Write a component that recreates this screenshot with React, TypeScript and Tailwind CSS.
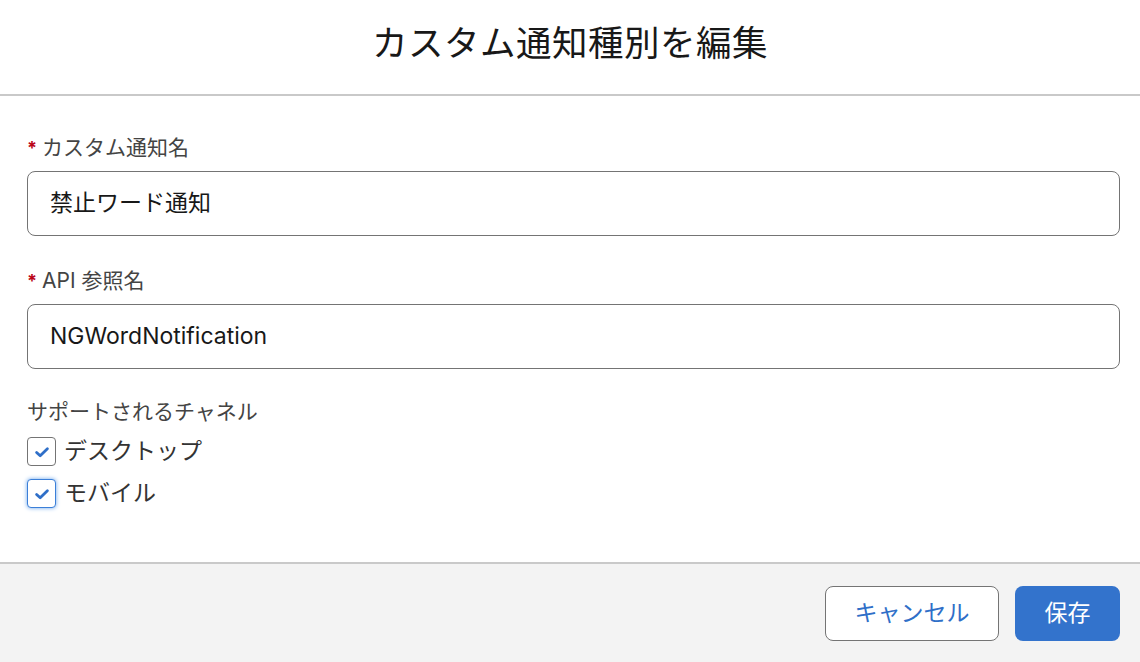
const Check = () => (
  <svg viewBox="0 0 16 16" className="w-[16px] h-[16px] mt-[2px]" fill="none">
    <path d="M2.6 8.4l3.6 3.4L13.4 4.8" stroke="#2f6fc8" strokeWidth="2.8" strokeLinecap="round" strokeLinejoin="round" />
  </svg>
);

const Field = ({ label, value }: { label: string; value: string }) => (
  <div>
    <div className="flex items-center h-[28px] text-[21px] leading-[28px] text-[#444444]">
      <span className="text-[#ba0517] text-[18px] font-bold w-[14px] mr-[1px]">*</span>
      <span>{label}</span>
    </div>
    <div className="mt-[9px] h-[65px] rounded-[8px] border border-[#747474] bg-white flex items-center px-[22px] text-[23px] text-[#181818]">
      {value}
    </div>
  </div>
);

const App = () => {
  return (
    <div className="w-[1140px] h-[662px] bg-white flex flex-col font-['Inter','Noto_Sans_CJK_JP',sans-serif] overflow-hidden">
      <div className="h-[96px] shrink-0 flex items-center justify-center border-b-2 border-[#c9c9c9] pb-[6px]">
        <h1 className="text-[35.5px] text-[#181818] tracking-[0.5px]">カスタム通知種別を編集</h1>
      </div>

      <div className="flex-1 px-[27px] pt-[38px] pr-[20px]">
        <Field label="カスタム通知名" value="禁止ワード通知" />
        <div className="mt-[31px]">
          <Field label="API 参照名" value="NGWordNotification" />
        </div>
        <div className="mt-[29px] h-[28px] text-[21px] leading-[28px] text-[#444444]">サポートされるチャネル</div>
        <div className="mt-[4px] flex flex-col">
          <label className="h-[42px] flex items-center gap-[8px] text-[23px] text-[#333333]">
            <span className="w-[29px] h-[29px] rounded-[4px] border border-[#747474] bg-white flex items-center justify-center">
              <Check />
            </span>
            デスクトップ
          </label>
          <label className="h-[42px] flex items-center gap-[8px] text-[23px] text-[#333333]">
            <span className="w-[29px] h-[29px] rounded-[4px] border border-[#3b7fd8] bg-white flex items-center justify-center shadow-[0_0_4px_#6aa5ec]">
              <Check />
            </span>
            モバイル
          </label>
        </div>
      </div>

      <div className="h-[100px] shrink-0 border-t-2 border-[#c9c9c9] bg-[#f3f3f3] flex items-center justify-end gap-[16px] pr-[20px]">
        <button className="w-[174px] h-[55px] rounded-[8px] border border-[#747474] bg-white text-[23px] text-[#2f6fc8]">
          キャンセル
        </button>
        <button className="w-[105px] h-[55px] rounded-[8px] bg-[#3373cc] text-[23px] text-white">保存</button>
      </div>
    </div>
  );
};

export default App;
